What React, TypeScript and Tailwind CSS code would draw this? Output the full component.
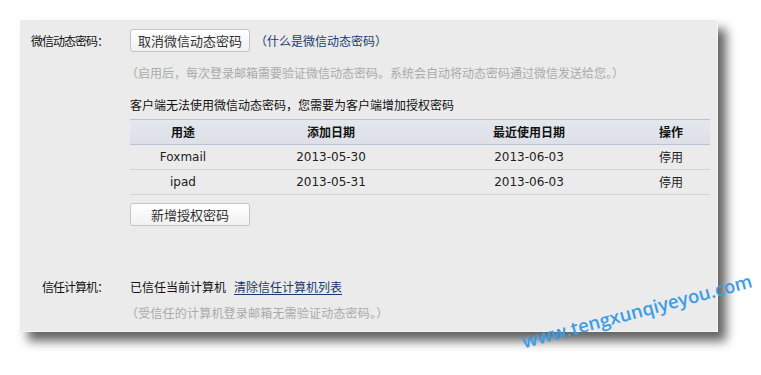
import React from "react";

const cjk = '"Noto Sans CJK SC", "Noto Sans", sans-serif';

function Btn({ children }: { children: React.ReactNode }) {
  return (
    <div className="w-[120px] h-[23px] flex items-center justify-center rounded-[3px] border border-[#c4c4c4] bg-gradient-to-b from-[#ffffff] to-[#f1f1f1] text-[13px] text-[#333] leading-none">
      {children}
    </div>
  );
}

export default function App() {
  const rows = [
    ["Foxmail", "2013-05-30", "2013-06-03"],
    ["ipad", "2013-05-31", "2013-06-03"],
  ];
  return (
    <div
      className="relative w-[761px] h-[375px] bg-white overflow-hidden pt-[20px] pl-[20px]"
      style={{ fontFamily: cjk }}
    >
      <div className="w-[698px] h-[312px] bg-[#ebebeb] shadow-[8px_9px_10px_rgba(0,0,0,0.62)] border-r border-b border-[#f6f6f6] pt-[9px] grid grid-cols-[88px_1fr] gap-x-[22px] content-start text-[12px] text-[#111]">
        <div className="text-right leading-[23px] h-[23px] tracking-[-1px]">微信动态密码：</div>
        <div className="flex flex-col">
          <div className="flex items-center gap-[5px]">
            <Btn>取消微信动态密码</Btn>
            <span className="text-[#1d3a6e] text-[12px]">（什么是微信动态密码）</span>
          </div>
          <div className="mt-[14px] leading-[14px] text-[#aaaaaa] text-[12px] -ml-[4px]">
            （启用后，每次登录邮箱需要验证微信动态密码。系统会自动将动态密码通过微信发送给您。）
          </div>
          <div className="mt-[18px] leading-[14px] text-[#111]">
            客户端无法使用微信动态密码，您需要为客户端增加授权密码
          </div>
          <div className="mt-[7px] w-[580px]">
            <div className="flex h-[26px] items-center bg-gradient-to-b from-[#e4e7ed] to-[#dde0e7] border-t border-b border-[#b9c3d4] font-bold text-[12px] text-[#111]">
              <div className="w-[106px] text-center">用途</div>
              <div className="w-[190px] text-center">添加日期</div>
              <div className="w-[206px] text-center">最近使用日期</div>
              <div className="w-[78px] text-center">操作</div>
            </div>
            {rows.map((r) => (
              <div
                key={r[0]}
                className="flex h-[25px] items-center border-b border-[#d4d4d4] text-[12px] text-[#222]"
                style={{ fontFamily: '"DejaVu Sans", Verdana, sans-serif' }}
              >
                <div className="w-[106px] text-center">{r[0]}</div>
                <div className="w-[190px] text-center">{r[1]}</div>
                <div className="w-[206px] text-center">{r[2]}</div>
                <div className="w-[78px] text-center" style={{ fontFamily: cjk }}>
                  停用
                </div>
              </div>
            ))}
          </div>
          <div className="mt-[8px]">
            <Btn>新增授权密码</Btn>
          </div>
        </div>

        <div className="mt-[54px] text-right leading-[14px] tracking-[-1px]">信任计算机：</div>
        <div className="mt-[54px] flex flex-col">
          <div className="leading-[14px] flex items-center gap-[8px]">
            <span>已信任当前计算机</span>
            <span className="text-[#1d3a6e] underline underline-offset-2">清除信任计算机列表</span>
          </div>
          <div className="mt-[12px] leading-[14px] text-[#aaaaaa] text-[12px] tracking-[0.2px] -ml-[4px]">
            （受信任的计算机登录邮箱无需验证动态密码。）
          </div>
        </div>
      </div>

      <div
        className="absolute left-[512px] top-[302px] w-[250px] text-center text-[18.5px] font-semibold text-[#3b9de6] -rotate-[15deg] leading-none"
        style={{ fontFamily: '"Open Sans", sans-serif' }}
      >
        www.tengxunqiyeyou.com
      </div>
    </div>
  );
}
